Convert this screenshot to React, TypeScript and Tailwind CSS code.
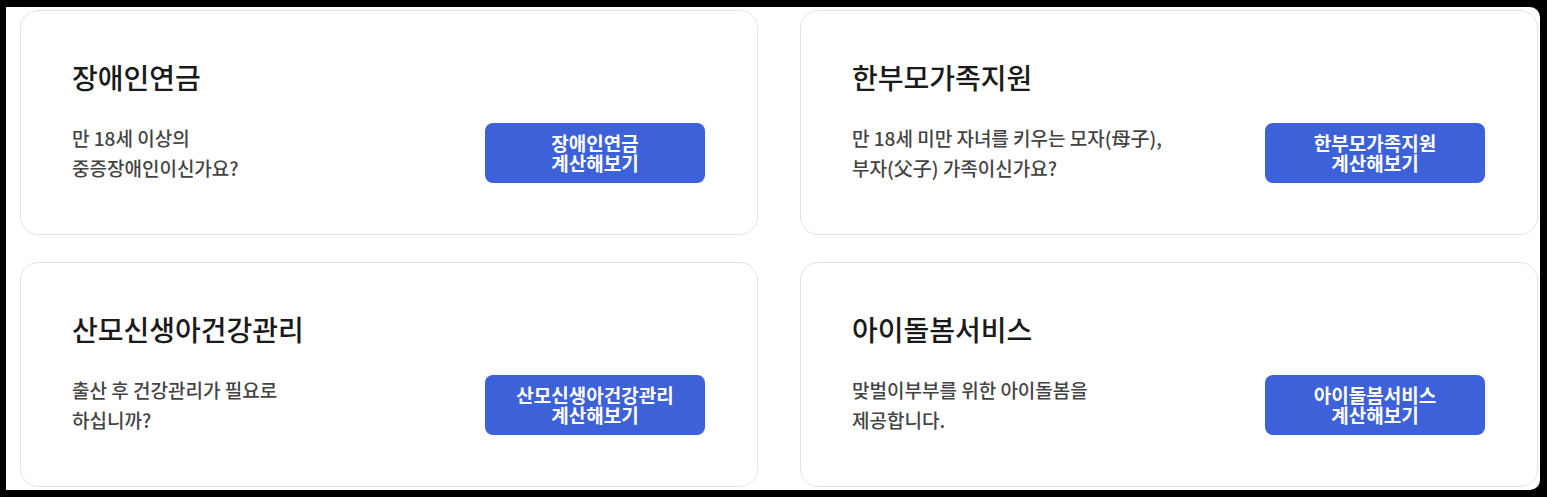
import React from "react";

const cards = [
  {
    title: "장애인연금",
    desc: ["만 18세 이상의", "중증장애인이신가요?"],
    btn: "장애인연금",
  },
  {
    title: "한부모가족지원",
    desc: ["만 18세 미만 자녀를 키우는 모자(母子),", "부자(父子) 가족이신가요?"],
    btn: "한부모가족지원",
  },
  {
    title: "산모신생아건강관리",
    desc: ["출산 후 건강관리가 필요로", "하십니까?"],
    btn: "산모신생아건강관리",
  },
  {
    title: "아이돌봄서비스",
    desc: ["맞벌이부부를 위한 아이돌봄을", "제공합니다."],
    btn: "아이돌봄서비스",
  },
];

export default function App() {
  return (
    <div
      className="w-[1547px] h-[497px] bg-black pl-[6px] pt-[7px] pr-[7px] pb-[7px]"
      style={{ fontFamily: '"Noto Sans CJK KR", "Noto Sans", sans-serif' }}
    >
      <div className="w-full h-full bg-white rounded-tr-[10px] rounded-br-[10px] overflow-hidden pl-[14px] pt-[3px]">
        <div className="grid grid-cols-[738px_738px] gap-x-[42px] gap-y-[27px]">
          {cards.map((c) => (
            <div
              key={c.title}
              className="h-[225px] border border-[#e3e3e3] rounded-[18px] pl-[51px] pr-[52px] pt-[46px]"
            >
              <div className="text-[28px] leading-[40px] font-medium text-[#1a1a1a]">
                {c.title}
              </div>
              <div className="mt-[26px] flex items-start justify-between">
                <div className="text-[19px] leading-[30px] font-medium text-[#444]">
                  {c.desc.map((d) => (
                    <div key={d}>{d}</div>
                  ))}
                </div>
                <button className="w-[220px] h-[60px] rounded-[8px] bg-[#3d61d8] text-white text-[19px] leading-[20px] font-bold flex flex-col items-center justify-center">
                  <span>{c.btn}</span>
                  <span>계산해보기</span>
                </button>
              </div>
            </div>
          ))}
        </div>
      </div>
    </div>
  );
}
